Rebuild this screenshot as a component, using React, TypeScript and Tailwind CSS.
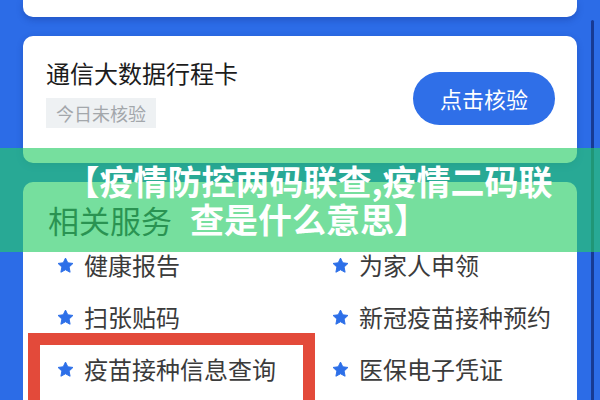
import { ReactNode } from "react";

const FONT = "font-['Noto_Sans_CJK_SC','Noto_Sans',sans-serif]";

const StarIcon = () => (
  <svg viewBox="0 0 24 24" className="w-[17px] h-[17px] shrink-0">
    <path
      d="M12 1.5l3.2 6.7 7.3.9-5.4 5.1 1.4 7.3L12 18l-6.5 3.5 1.4-7.3-5.4-5.1 7.3-.9z"
      fill="#2d6fe8"
      stroke="#2d6fe8"
      strokeWidth="1.4"
      strokeLinejoin="round"
    />
  </svg>
);

const ServiceItem = ({ children }: { children: ReactNode }) => (
  <div className="flex items-center gap-[10px] h-[52px]">
    <StarIcon />
    <span className="text-[24px] leading-none text-[#3b3b3b]">{children}</span>
  </div>
);

const services = [
  "健康报告",
  "为家人申领",
  "扫张贴码",
  "新冠疫苗接种预约",
  "疫苗接种信息查询",
  "医保电子凭证",
];

const App = () => {
  return (
    <div className={`relative w-[600px] h-[400px] overflow-hidden bg-[#2c6ce7] ${FONT}`}>
      <div className="flex flex-col h-full px-[23px]">
        {/* bottom edge of the card above */}
        <div className="h-[17px] bg-white rounded-b-[10px] shadow-[0_3px_6px_rgba(20,50,140,0.35)]" />

        {/* Itinerary card */}
        <div className="mt-[19px] h-[127px] shrink-0 bg-white rounded-[10px] flex justify-between pl-[23px] pr-[22px] shadow-[0_2px_6px_rgba(20,50,140,0.3)]">
          <div className="flex flex-col pt-[22px]">
            <p className="text-[24px] leading-[30px] text-[#1c1c1c]">通信大数据行程卡</p>
            <div className="mt-[10px] self-start bg-[#eef1f3] px-[10px] h-[30px] flex items-center">
              <span className="text-[18px] text-[#a3a7ab]">今日未核验</span>
            </div>
          </div>
          <button className="self-center w-[142px] h-[53px] rounded-full bg-[#2f6fe8] text-white text-[22px] mt-[-2px]">
            点击核验
          </button>
        </div>

        {/* Related services */}
        <div className="mt-[19px] flex-1 bg-white rounded-t-[10px] pt-[19px]">
          <p className="pl-[25px] text-[31px] leading-[38px] text-[#333]">相关服务</p>
          <div className="grid grid-cols-[275px_1fr] pl-[34px]">
            {services.map((s, i) => (
              <ServiceItem key={i}>{s}</ServiceItem>
            ))}
          </div>
        </div>
      </div>

      {/* scroll indicator */}
      <div className="absolute right-[6px] top-[20px] bottom-0 w-[3px] bg-[#173a94] rounded-t-full" />

      {/* highlight box */}
      <div className="absolute left-[28px] top-[333px] w-[287px] h-[80px] border-[12px] border-[#e34a3a]" />

      {/* title banner */}
      <div className="absolute left-0 right-0 top-[148px] h-[104px] bg-[rgba(38,204,101,0.63)] pt-[14px] pl-[18px]">
        <p className="text-center text-white font-bold text-[34px] leading-[38px]">
          【疫情防控两码联查,疫情二码联
          <br />
          查是什么意思】
        </p>
      </div>
    </div>
  );
};

export default App;
